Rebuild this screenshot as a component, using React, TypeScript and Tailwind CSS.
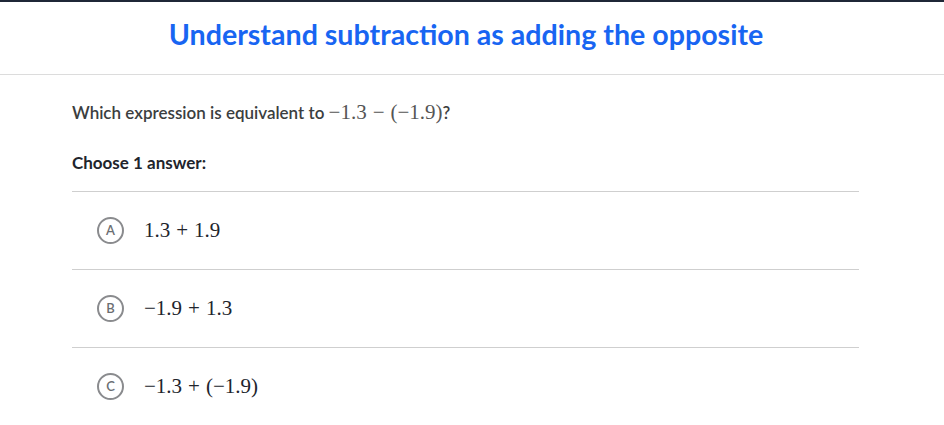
import React from 'react';

const math = { fontFamily: '"Liberation Serif", "DejaVu Serif", serif' };

const Op: React.FC<{ c: string }> = ({ c }) => <span className="px-[6px]">{c}</span>;

const Choice: React.FC<{ letter: string; children: React.ReactNode }> = ({ letter, children }) => (
    <div className="flex items-center h-[78px] border-b border-[#cfcfcf] pl-[25px]">
        <span className="flex items-center justify-center w-[27px] h-[27px] rounded-full border-2 border-[#8a8b8e] text-[13px] font-semibold text-[#6b6e72]">
            {letter}
        </span>
        <span className="ml-[20px] text-[21px] text-[#21242c]" style={math}>{children}</span>
    </div>
);

const App: React.FC = () => {
    return (
        <div className="w-[944px] h-[425px] bg-white overflow-hidden" style={{ fontFamily: 'Lato, "Noto Sans", sans-serif' }}>
            <div className="h-[2px] bg-[#1f2737]" />
            <div className="h-[73px] flex items-center justify-center border-b border-[#dcdcdc] pr-[12px]">
                <h1 className="text-[28.6px] font-bold text-[#1865f2] -mt-[7px]">Understand subtraction as adding the opposite</h1>
            </div>
            <div className="pl-[72px]">
                <p className="mt-[22px] text-[17px] font-semibold text-[#3b3e40] flex items-baseline">
                    Which expression is equivalent to&nbsp;
                    <span className="text-[21px] font-normal text-[#555]" style={math}>−1.3<Op c="−" />(−1.9)</span>?
                </p>
                <p className="mt-[21px] text-[17px] font-bold text-[#21242c]">Choose 1 answer:</p>
                <div className="mt-[16px] border-t border-[#cfcfcf] w-[787px]">
                    <Choice letter="A">1.3<Op c="+" />1.9</Choice>
                    <Choice letter="B">−1.9<Op c="+" />1.3</Choice>
                    <Choice letter="C">−1.3<Op c="+" />(−1.9)</Choice>
                </div>
            </div>
        </div>
    );
};

export default App;
